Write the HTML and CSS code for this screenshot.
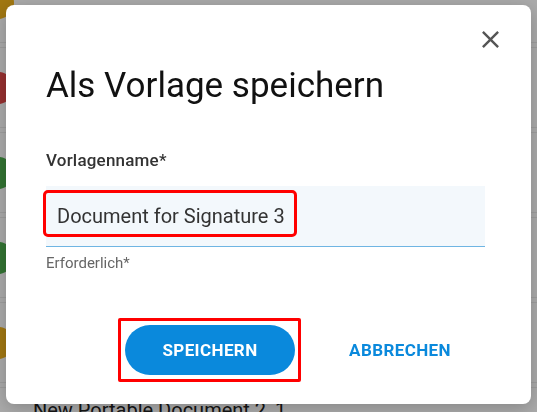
FILE: index.html
```html
<!DOCTYPE html>
<html lang="de">
<head>
    <meta charset="UTF-8">
    <meta name="viewport" content="width=device-width, initial-scale=1.0">
    <title>Als Vorlage speichern</title>
    <link rel="stylesheet" href="styles.css">
</head>
<body>
    <ul class="doc-list">
        <li class="doc-row"><span class="dot dot-yellow"></span><span class="doc-name">Rental Agreement 1</span></li>
        <li class="doc-row"><span class="dot dot-red"></span><span class="doc-name">Invoice March</span></li>
        <li class="doc-row"><span class="dot dot-green"></span><span class="doc-name">Document for Signature 2</span></li>
        <li class="doc-row"><span class="dot dot-green"></span><span class="doc-name">Document for Signature 3</span></li>
        <li class="doc-row"><span class="dot dot-yellow"></span><span class="doc-name">Offer 2024</span></li>
        <li class="doc-row"><span class="dot dot-green"></span><span class="doc-name">New Portable Document 2_1</span></li>
    </ul>

    <div class="overlay"></div>

    <div class="dialog">
        <button class="close-btn" aria-label="Schließen">
            <svg viewBox="0 0 24 24" width="29" height="29"><path d="M19 6.41L17.59 5 12 10.59 6.41 5 5 6.41 10.59 12 5 17.59 6.41 19 12 13.41 17.59 19 19 17.59 13.41 12z" fill="currentColor"/></svg>
        </button>
        <h2 class="dialog-title">Als Vorlage speichern</h2>
        <label class="field-label">Vorlagenname*</label>
        <div class="field">
            <span class="field-value mark">Document for Signature 3</span>
        </div>
        <div class="field-hint">Erforderlich*</div>
        <div class="actions">
            <span class="mark mark-btn"><button class="btn btn-primary">SPEICHERN</button></span>
            <button class="btn btn-text">ABBRECHEN</button>
        </div>
    </div>
</body>
</html>
```

FILE: styles.css
```css
body {
    margin: 0;
    font-family: 'Roboto', 'Liberation Sans', sans-serif;
    background: #fff;
    overflow: hidden;
}
.doc-list {
    list-style: none;
    margin: -38px 0 0;
    padding: 0;
}
.doc-row {
    display: flex;
    align-items: flex-start;
    height: 81px;
    padding: 10px 0 0;
    box-sizing: border-box;
    border-top: 1px solid #ececec;
    border-bottom: 1px solid #ececec;
    margin-bottom: 4px;
}
.dot {
    width: 32px;
    height: 32px;
    border-radius: 50%;
    margin: 14px 19px 0 -18px;
    flex: none;
}
.dot-yellow { background: #f2b41b; }
.dot-red { background: #e04848; }
.dot-green { background: #4cae4c; }
.doc-name {
    font-size: 20px;
    line-height: 24px;
    color: #222;
}
.overlay {
    position: fixed;
    inset: 0;
    background: rgba(0, 0, 0, 0.33);
}
.dialog {
    position: fixed;
    left: 6px;
    top: 5px;
    width: 525px;
    height: 399px;
    box-sizing: border-box;
    padding: 61px 46px 0 40px;
    background: #fff;
    border-radius: 8px;
    box-shadow: 0 4px 18px rgba(0, 0, 0, 0.22);
}
.close-btn {
    position: absolute;
    top: 20px;
    right: 26px;
    width: 29px;
    height: 29px;
    padding: 0;
    border: 0;
    background: none;
    color: #555;
    cursor: pointer;
}
.close-btn svg {
    display: block;
}
.dialog-title {
    margin: 0;
    font-size: 35px;
    line-height: 40px;
    font-weight: 400;
    color: #111;
}
.field-label {
    display: block;
    margin-top: 44px;
    font-size: 17px;
    line-height: 20px;
    font-weight: 500;
    letter-spacing: 0.2px;
    color: #333;
}
.field {
    margin-top: 16px;
    padding: 7px 0 12px;
    background: #f3f8fc;
    border-bottom: 1px solid #6fb5e3;
}
.field-value {
    display: block;
    width: fit-content;
    padding: 11px 9px 6px 11px;
    font-size: 20px;
    line-height: 24px;
    color: #333;
}
.mark {
    outline: 3px solid #f00;
    border-radius: 2px;
}
.mark-btn {
    display: flex;
    outline: none;
    border: 3px solid #f00;
    padding: 4px 3px 4px 4px;
}
.field-hint {
    margin-top: 8px;
    font-size: 15px;
    line-height: 16px;
    color: #666;
}
.actions {
    display: flex;
    justify-content: flex-end;
    align-items: center;
    gap: 14px;
    margin-top: 47px;
}
.btn {
    width: 170px;
    height: 50px;
    padding: 0;
    border: 0;
    border-radius: 25px;
    font-family: inherit;
    font-size: 17px;
    font-weight: 700;
    letter-spacing: 0.4px;
    cursor: pointer;
}
.btn-primary {
    background: #0a89dc;
    color: #fff;
}
.btn-text {
    background: none;
    color: #0a89dc;
}
```
